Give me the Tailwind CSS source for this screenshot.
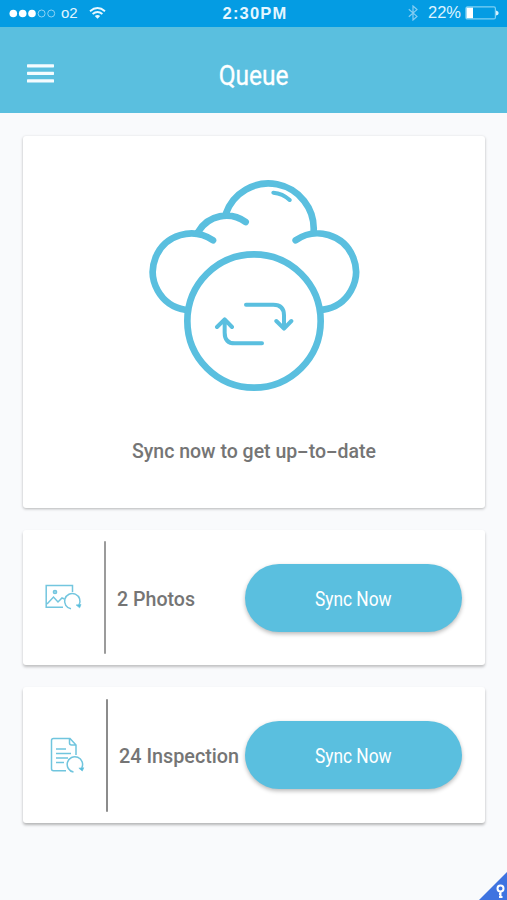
<!DOCTYPE html>
<html lang="en">
<head>
<meta charset="utf-8">
<title>Queue</title>
<script src="https://cdn.jsdelivr.net/npm/@tailwindcss/browser@4"></script>
</head>
<body class="bg-[#f9fafc]">
<div class="relative flex h-[900px] w-[507px] flex-col overflow-hidden font-[Roboto,sans-serif]">
  <div class="grid h-[27px] shrink-0 grid-cols-3 items-center bg-[#049ce3] pl-[9px] pr-[8px] font-['Liberation_Sans',sans-serif] text-white">
    <div class="flex items-center">
      <svg class="h-[10px] w-[47px]" viewBox="0 0 47 10" fill="#fff">
        <circle cx="4.3" cy="4.5" r="3.8"/><circle cx="13.7" cy="4.5" r="3.8"/><circle cx="23" cy="4.5" r="3.8"/>
        <g fill="none" stroke="#8ed3f5" stroke-width="1"><circle cx="32.6" cy="4.5" r="3.5"/><circle cx="42.2" cy="4.5" r="3.5"/></g>
      </svg>
      <span class="ml-[5px] w-[17px] pb-[2px] text-[15px] leading-none text-[#e2f5ff]">o2</span>
      <svg class="mb-[2px] ml-[11px] h-[12px] w-[17px]" viewBox="0 0 17 12" fill="none" stroke="#e9f8ff" stroke-width="1.9">
        <path d="M1 4.2Q8.5-2 16 4.2M3.6 7.1Q8.5 3.1 13.4 7.1"/><path d="M5.8 9Q8.5 6.8 11.2 9L8.5 11.8Z" fill="#e9f8ff" stroke="none"/>
      </svg>
    </div>
    <div class="pb-px pl-[2px] text-center text-[16.5px] font-bold leading-none tracking-[1.2px] text-[#e4f6ff]">2:30PM</div>
    <div class="flex items-center justify-end pb-px">
      <svg class="h-[16px] w-[10px]" viewBox="0 0 10 16" fill="none" stroke="#86cdf2" stroke-width="1.2"><path d="M.8 4.3 9 11.4 5 15V1L9 4.6.8 11.7"/></svg>
      <span class="ml-[10px] pb-px text-[16.5px] leading-none text-[#dcf3ff]">22%</span>
      <svg class="ml-[4px] h-[14px] w-[34px]" viewBox="0 0 34 14"><rect x=".9" y=".9" width="29.5" height="12" rx="1.5" fill="none" stroke="#7ed0f4" stroke-width="1.2"/><rect x="1.5" y="1.6" width="6.5" height="10.6" fill="#fff"/><path d="M31 4.5q2.7.5 2.7 2.5t-2.7 2.5Z" fill="#d5f1ff"/></svg>
    </div>
  </div>
  <header class="grid h-[86px] shrink-0 grid-cols-3 items-center bg-[#5abfdf] px-[27px] pt-[7px] text-white">
    <svg class="h-[19px] w-[27px]" viewBox="0 0 27 19" fill="#f5fcff"><rect y=".2" width="27" height="3.2" rx=".6"/><rect y="7.7" width="27" height="3.2" rx=".6"/><rect y="15.3" width="27" height="3.2" rx=".6"/></svg>
    <h1 class="pl-px pt-[5px] text-center text-[28.5px] leading-[34px]"><span class="inline-block scale-x-[0.86] [-webkit-text-stroke:0.3px_white]">Queue</span></h1>
  </header>
  <main class="flex flex-col gap-[22px] pl-[23px] pr-[22px] pt-[23px]">
    <section class="flex h-[372px] flex-col items-center rounded-[3px] bg-white pt-[34px] shadow-[0_1px_3px_rgba(0,0,0,0.28)]">
      <svg class="h-[230px] w-[228px]" viewBox="0 0 684 690" fill="none" stroke="#5abfdf" stroke-linecap="round">
        <g stroke-width="20">
          <circle cx="342" cy="453" r="200"/>
          <path d="M219 211A115 115 0 1 0 135 419M467 211A115 115 0 1 1 550 419M175 185A98 98 0 0 1 317 156M257 132A135.8 135.8 0 0 1 521 183"/>
        </g>
        <g stroke-width="12" stroke-linejoin="round">
          <path d="M400 68Q428 70 449 90M318 404H400Q432 404 432 436V475M409 453L432 476 454 453M366 520H285Q254 520 254 488V450M231 471L254 448 276 471"/>
        </g>
      </svg>
      <p class="mt-[40px] whitespace-nowrap text-[19.5px] font-medium leading-[24px] text-[#757575]">Sync now to get up<span class="inline-block w-[11.5px] origin-left scale-x-[1.75] align-baseline">-</span>to<span class="inline-block w-[11.5px] origin-left scale-x-[1.75] align-baseline">-</span>date</p>
    </section>
    <section class="flex h-[135px] items-center rounded-[3px] bg-white pl-[22px] pr-[23px] shadow-[0_2px_3px_rgba(0,0,0,0.24)]">
      <svg class="h-[27px] w-[37px]" viewBox="0 0 37 27" fill="none" stroke="#73c6df" stroke-width="1.5">
        <path d="M27.5 8V1.5H1.2V23.3H18M2 20L8.5 13 13 18 17 14 19.5 15"/><circle cx="10" cy="8" r="1.6" fill="#a8dceb"/>
        <path d="M26 24.8A7.7 7.7 0 1 1 34 21"/><path d="M31.2 21L36 20.5 34.6 23.8Z" fill="#4dbbdc" stroke-width=".8"/>
      </svg>
      <div class="ml-[22px] h-[113px] w-[2px] rounded-full bg-[#9b9b9b]"></div>
      <div class="ml-[11px] w-[128px] whitespace-nowrap pt-[4px] text-[19.6px] font-medium text-[#757575]">2 Photos</div>
      <button class="h-[68px] w-[217px] rounded-full bg-[#5abfdf] pt-[2px] text-[20px] text-white shadow-[0_2px_4px_rgba(0,0,0,0.28)]"><span class="inline-block scale-x-[0.865]">Sync Now</span></button>
    </section>
    <section class="flex h-[136px] items-center rounded-[3px] bg-white pl-[27px] pr-[23px] shadow-[0_2px_3px_rgba(0,0,0,0.28)]">
      <svg class="h-[37px] w-[35px]" viewBox="0 0 35 37" fill="none" stroke="#70c5de" stroke-width="1.5">
        <path d="M26 18V8L20 1.5H3.5Q1.5 1.5 1.5 3.5V31.7Q1.5 33.7 3.5 33.7H16M19.5 1.5V6Q19.5 8 21.5 8H26M6 12H16M6 16.5H21M6 21H18M6 25.5H14"/>
        <path d="M23.5 35A7.7 7.7 0 1 1 31.7 31"/><path d="M28.9 31.2L33.7 30.8 32.3 34Z" fill="#4dbbdc" stroke-width=".8"/>
      </svg>
      <div class="ml-[21px] h-[113px] w-[2px] rounded-full bg-[#8c8c8c]"></div>
      <div class="ml-[11px] w-[126px] whitespace-nowrap pt-[3px] text-[19.8px] font-medium text-[#757575]">24 Inspection</div>
      <button class="h-[68px] w-[217px] rounded-full bg-[#5abfdf] pt-[2px] text-[20px] text-white shadow-[0_2px_4px_rgba(0,0,0,0.28)]"><span class="inline-block scale-x-[0.865]">Sync Now</span></button>
    </section>
  </main>
  <svg class="absolute bottom-0 right-0 h-[28px] w-[28px]" viewBox="0 0 28 28"><path d="M28 0V28H0Z" fill="#3f73e0"/><circle cx="21.5" cy="16.5" r="3" fill="none" stroke="#fff" stroke-width="2"/><path d="M21.5 19V26M20 25H23.5M20 22H22" fill="none" stroke="#fff" stroke-width="2"/></svg>
</div>
</body>
</html>
